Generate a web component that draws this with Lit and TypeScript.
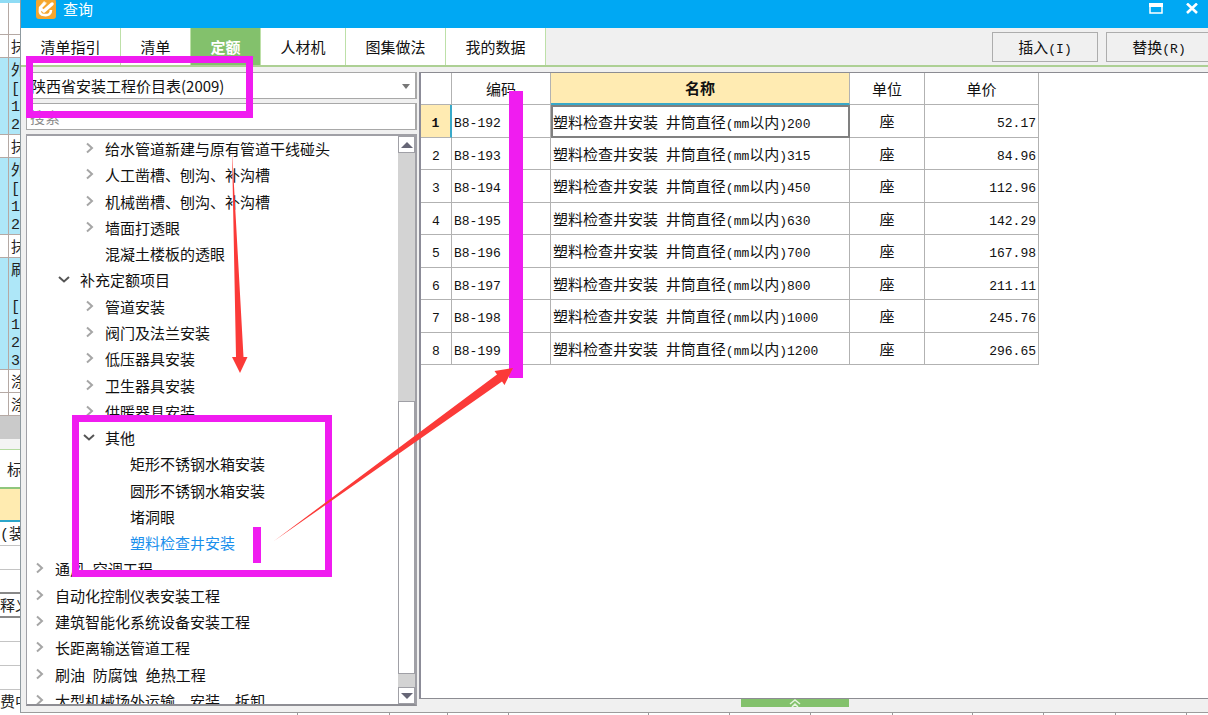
import { LitElement, html, css, svg } from "lit";
import { customElement, state } from "lit/decorators.js";
import { classMap } from "lit/directives/class-map.js";

const base = css`
  *, *::before, *::after { box-sizing: border-box; }
  .latin { font-family: "Liberation Mono", monospace; font-size: 13px; line-height: 1; white-space: pre; }
`;

/** Sets runs of Latin text in the narrow monospace face. */
const mixed = (text: string) =>
  text
    .split(/([\x20-\x7e]+)/)
    .map((part) => (/^[\x20-\x7e]/.test(part) ? html`<span class="latin">${part}</span>` : part));

/* ---------- sheet visible behind the dialog ---------- */

@customElement("back-sheet")
class BackSheet extends LitElement {
  static styles = [base, css`
    :host { display: block; width: 20px; overflow: hidden; background: #fff; color: #222;
      border-top: 3px solid #8fdcf5; font-size: 15px; line-height: 18px; white-space: nowrap; }
    .latin { font-size: 15px; }
    .row { display: grid; grid-template-columns: 9px 40px; border-bottom: 1px solid #b5a9a4; }
    .num { border-right: 1px solid #b5a9a4; }
    .body { padding: 2px 0 0 2px; overflow: hidden; }
    .head { height: 32px; }
    .short { height: 23px; }
    .tall { height: 77px; background: #aee7f8; }
    .taller { height: 112px; background: #aee7f8; }
    .line { height: 18px; }
    .scroll { height: 23px; background: #cacaca; }
    .gap { height: 11px; background: #f4f4f4; border-bottom: 1px solid #b4dba0; }
    .title { height: 39px; padding: 10px 0 0 7px; border-bottom: 2px solid #8fc67c; }
    .pick { height: 33px; background: #ffebb0; border-bottom: 2px solid #2ba5c9; }
    .cell { height: 24px; padding-top: 2px; border-bottom: 1px solid #c4c4c4; overflow: hidden; }
    .dark { border-bottom: 2px solid #888; }
  `];

  render() {
    const row = (kind: string, lines: string[]) => html`
      <div class="row ${kind}"><div class="num"></div>
        <div class="body">${lines.map((l) => html`<div class="line">${mixed(l)}</div>`)}</div></div>`;
    return html`
      ${row("head", [])}
      ${row("short", ["抹"])}
      ${row("tall", ["外", "[", "1", "2"])}
      ${row("short", ["抹"])}
      ${row("tall", ["外", "[", "1", "2"])}
      ${row("short", ["抹"])}
      ${row("taller", ["刷", "", "[", "1", "2", "3"])}
      ${row("short", ["涂"])}
      ${row("short", ["涂"])}
      <div class="scroll"></div>
      <div class="gap"></div>
      <div class="title">标</div>
      <div class="pick"></div>
      <div class="cell">${mixed("(")}装</div>
      <div class="cell"></div>
      <div class="cell dark"></div>
      <div class="cell dark">释义</div>
      <div class="cell"></div>
      <div class="cell"></div>
      <div class="cell"></div>
      <div class="cell">费中</div>`;
  }
}

/* ---------- category tree ---------- */

interface TreeItem { label: string; level: number; mark?: "open" | "closed"; }

const item = (level: number, label: string, mark?: "open" | "closed"): TreeItem => ({ level, label, mark });

const TREE: TreeItem[] = [
  item(2, "给水管道新建与原有管道干线碰头", "closed"),
  item(2, "人工凿槽、刨沟、补沟槽", "closed"),
  item(2, "机械凿槽、刨沟、补沟槽", "closed"),
  item(2, "墙面打透眼", "closed"),
  item(2, "混凝土楼板的透眼"),
  item(1, "补充定额项目", "open"),
  item(2, "管道安装", "closed"),
  item(2, "阀门及法兰安装", "closed"),
  item(2, "低压器具安装", "closed"),
  item(2, "卫生器具安装", "closed"),
  item(2, "供暖器具安装", "closed"),
  item(2, "其他", "open"),
  item(3, "矩形不锈钢水箱安装"),
  item(3, "圆形不锈钢水箱安装"),
  item(3, "堵洞眼"),
  item(3, "塑料检查井安装"),
  item(0, "通风 空调工程", "closed"),
  item(0, "自动化控制仪表安装工程", "closed"),
  item(0, "建筑智能化系统设备安装工程", "closed"),
  item(0, "长距离输送管道工程", "closed"),
  item(0, "刷油 防腐蚀 绝热工程", "closed"),
  item(0, "大型机械场外运输、安装、拆卸", "closed"),
];

@customElement("category-tree")
class CategoryTree extends LitElement {
  @state() private selected = "塑料检查井安装";

  static styles = [base, css`
    :host { display: flex; min-height: 0; overflow: hidden; background: #fff; border: 2px solid #a0a0a6;
      border-left-width: 1px; border-bottom-color: #8e8e94; box-sizing: border-box; }
    .view { flex: 1; min-width: 0; overflow: hidden; }
    .list { display: grid; grid-auto-rows: 1fr; height: calc(100% + 10px); margin: 0; padding: 0; list-style: none; }
    .item { display: flex; align-items: center; gap: 8px; padding-left: 4px; min-height: 0;
      line-height: 20px; white-space: nowrap; cursor: default; }
    .l1 { padding-left: 29px; }
    .l2 { padding-left: 54px; }
    .l3 { padding-left: 79px; }
    .selected { color: #1a8fec; }
    .mark { width: 16px; height: 16px; flex: none; fill: none; stroke: #a6a6a6; stroke-width: 2; }
    .open { stroke: #555; }
    .bar { display: flex; flex-direction: column; width: 17px; background: #d3d3d3; }
    .arrow { display: grid; place-items: center; height: 17px; padding: 0; background: #fff; border: 1px solid #a0a0a6; }
    .arrow svg { width: 12px; height: 6px; fill: #666676; }
    .before { flex: 249; }
    .thumb { flex: 273; background: #fff; border: 1px solid #a0a0a6; }
    .after { flex: 13; }
  `];

  render() {
    return html`
      <div class="view">
        <ul class="list" role="tree">
          ${TREE.map((t) => html`
            <li role="treeitem" class=${classMap({ item: true, [`l${t.level}`]: true, selected: t.label === this.selected })}
              @click=${() => (this.selected = t.label)}>
              <svg class=${classMap({ mark: true, open: t.mark === "open" })} viewBox="0 0 16 16">
                ${t.mark === "open" ? svg`<path d="M3 5 L8 9.500 L13 5"/>` : ""}
                ${t.mark === "closed" ? svg`<path d="M6 2.500 L11 7 L6 11.500"/>` : ""}
              </svg>
              <span>${mixed(t.label)}</span>
            </li>`)}
        </ul>
      </div>
      <div class="bar">
        <button class="arrow" aria-label="向上"><svg viewBox="0 0 12 6"><path d="M6 0 L12 6 H0Z"/></svg></button>
        <div class="before"></div><div class="thumb"></div><div class="after"></div>
        <button class="arrow" aria-label="向下"><svg viewBox="0 0 12 6"><path d="M6 6 L12 0 H0Z"/></svg></button>
      </div>`;
  }
}

/* ---------- price table ---------- */

const ROWS: [string, string, string][] = [
  ["B8-192", "200", "52.17"],
  ["B8-193", "315", "84.96"],
  ["B8-194", "450", "112.96"],
  ["B8-195", "630", "142.29"],
  ["B8-196", "700", "167.98"],
  ["B8-197", "800", "211.11"],
  ["B8-198", "1000", "245.76"],
  ["B8-199", "1200", "296.65"],
];

@customElement("price-table")
class PriceTable extends LitElement {
  static styles = [base, css`
    :host { display: block; box-sizing: border-box; background: #fff; overflow: hidden;
      border: 1px solid #8c8c92; border-left: 2px solid #8c8c98; border-right: 0; }
    .table { border-collapse: separate; border-spacing: 0; table-layout: fixed; width: 618px; }
    .index { width: 31px; }
    .code { width: 99px; }
    .name { width: 299px; }
    .unit { width: 75px; }
    .price { width: 114px; }
    th, td { height: 32px; padding: 0 2px; border: 0 solid #b2b2b2; border-width: 0 1px 1px 0;
      font-weight: normal; line-height: 20px; text-align: left; white-space: nowrap; overflow: hidden; }
    .odd th, .odd td { height: 33px; }
    .table .mid { text-align: center; }
    .table .end { text-align: right; }
    .table .hot { background: #ffebb2; font-weight: bold; }
    .table .top { border-bottom: 2px solid #38a9c9; }
    .table .side { border-right: 2px solid #38a9c9; }
    .table .focus { padding: 0 0 0 2px; border: 0; box-shadow: inset 0 0 0 2px #808080; }
  `];

  render() {
    return html`
      <table class="table">
        <colgroup><col class="index"><col class="code"><col class="name"><col class="unit"><col class="price"></colgroup>
        <thead><tr>
          <th></th><th class="mid">编码</th><th class="mid hot top">名称</th><th class="mid">单位</th><th class="mid">单价</th>
        </tr></thead>
        <tbody>
          ${ROWS.map(([code, size, price], i) => html`
            <tr class=${i % 2 ? "" : "odd"}>
              <th class=${classMap({ mid: true, hot: i === 0, side: i === 0 })}>${mixed(String(i + 1))}</th>
              <td>${mixed(code)}</td>
              <td class=${i === 0 ? "focus" : ""}>${mixed(`塑料检查井安装 井筒直径(mm以内)${size}`)}</td>
              <td class="mid">座</td>
              <td class="end">${mixed(price)}</td>
            </tr>`)}
        </tbody>
      </table>`;
  }
}

/* ---------- hand-drawn notes over the window ---------- */

@customElement("markup-layer")
class MarkupLayer extends LitElement {
  static styles = css`
    :host { position: absolute; inset: 0; overflow: hidden; pointer-events: none; }
    .canvas { display: block; width: 1208px; height: 715px; }
    .frame { fill: none; stroke: #f01cf0; stroke-width: 7; }
    .block { fill: #f01cf0; }
    .arrow { fill: #fb3a38; }
  `;
  render() {
    return html`
      <svg class="canvas" viewBox="0 0 1208 715">
        <rect class="frame" x="29.5" y="59.5" width="220" height="55"/>
        <rect class="frame" x="75.5" y="418.5" width="253" height="155"/>
        <rect class="block" x="253" y="527" width="8" height="36"/>
        <rect class="block" x="509" y="91" width="14" height="287"/>
        <path class="arrow" d="M232 150 L243.500 357 H247.500 L240 373 L232 357 H236Z"/>
        <path class="arrow" d="M274 541 L497 374.500 L494.500 371 L513 368 L504.500 385 L502 381.500Z"/>
      </svg>`;
  }
}

/* ---------- dialog ---------- */

const TABS: [string, string][] = [
  ["清单指引", "wide"], ["清单", "narrow"], ["定额", "narrow"],
  ["人材机", "medium"], ["图集做法", "wide"], ["我的数据", "wide"],
];

@customElement("app-root")
class AppRoot extends LitElement {
  @state() private tab = "定额";

  static styles = [base, css`
    :host { position: relative; display: grid; grid-template: minmax(0, 1fr) 2px / 20px minmax(0, 1fr);
      height: 100vh; overflow: hidden; background: #fff; color: #111;
      font-family: "Noto Sans CJK SC", sans-serif; font-size: 15px; }
    .dialog { display: flex; flex-direction: column; min-height: 0; background: #f0f0f0;
      border-left: 1px solid #8f9aa0; border-bottom: 1px solid #9c9c9c; overflow: hidden; }
    .titlebar { display: flex; align-items: center; gap: 7px; height: 28px; padding: 0 9px 11px 15px;
      background: #00a8f3; color: #fff; }
    .logo { width: 20px; height: 20px; }
    .caption { flex: 1; margin: 0; font-size: 15px; font-weight: normal; line-height: 18px; }
    .sys { display: grid; place-items: center; width: 14px; height: 16px; padding: 0; background: none; border: 0; }
    .sys svg { width: 14px; height: 12px; fill: none; stroke: #fff; }
    .controls { display: flex; gap: 22px; }
    .tabs { display: flex; align-items: stretch; height: 39px; border-bottom: 2px solid #add094; }
    .tab { width: 100px; padding: 1px 0 0; background: #fff; border: 0; border-right: 1px solid #bde0a8;
      font: inherit; line-height: 20px; color: #111; }
    .narrow { width: 70px; }
    .medium { width: 85px; }
    .current { background: #83c16c; color: #fff; font-weight: bold; }
    .actions { display: flex; gap: 8px; margin: 4px -4px 3px auto; }
    .action { width: 106px; padding: 0; background: #f0f0f0; border: 1px solid #adadad; font: inherit; color: #111; line-height: 20px; }
    .content { flex: 1; display: grid; grid-template-columns: 391px minmax(0, 1fr); gap: 2px; min-height: 0;
      padding: 5px 0 0 5px; }
    .side { display: grid; grid-template-rows: 27px 27px minmax(0, 1fr); gap: 4px; min-height: 0; padding-bottom: 6px; }
    .picker { position: relative; display: block; }
    .select, .search { display: block; width: 100%; height: 27px; padding: 0 4px; margin: 0; background: #fff;
      border: 1px solid #a8a8a8; border-right: 2px solid #a8a8a8; border-radius: 0; font: inherit; line-height: 20px; color: #111; appearance: none; outline: 0; }
    .search { padding: 0 3px; }
    .search::placeholder { color: #8c8c8c; }
    .caret { position: absolute; right: 7px; top: 12px; width: 8px; height: 5px; fill: #777; pointer-events: none; }
    .main { display: grid; grid-template-rows: minmax(0, 1fr) 8px; padding-bottom: 5px; min-height: 0; }
    .handle { display: grid; place-items: center; justify-self: center; width: 108px; height: 8px; margin-right: 38px; padding: 0; border: 0; background: #83c16c; }
    .handle svg { width: 12px; height: 8px; fill: none; stroke: #e6f4df; stroke-width: 1.500; }
    .ruler { grid-column: 1 / -1; display: grid; background: #fff;
      grid-template-columns: 298fr 93fr 58fr 61fr 140fr 81fr 81fr 82fr 81fr 71fr 72fr 71fr 21fr; }
    .tick { border-right: 1px solid #999; }
  `];

  render() {
    return html`
      <back-sheet></back-sheet>
      <section class="dialog" aria-label="查询">
        <header class="titlebar">
          <svg class="logo" viewBox="0 0 20 20">
            <rect width="20" height="20" rx="3" fill="#f5a62d"/>
            <path d="M3 8 L8 2 L11 4 L6 9 Z" fill="#ffe6b5"/>
            <path d="M9 4 L4 9 L8 12 M4 10 Q3 16 8 16 Q15 17 15 11" fill="none" stroke="#fff" stroke-width="2.600" stroke-linejoin="round"/>
            <path d="M8 12 L16 5" fill="none" stroke="#fff" stroke-width="3.500" stroke-linecap="round"/>
          </svg>
          <h1 class="caption">查询</h1>
          <div class="controls">
            <button class="sys" aria-label="最大化"><svg viewBox="0 0 14 12"><path d="M1 1V10H13V1" stroke-width="1.500"/><path d="M0 2H14" stroke-width="4"/></svg></button>
            <button class="sys" aria-label="关闭"><svg viewBox="0 0 14 12"><path d="M2 0.500 L12 10 M12 0.500 L2 10" stroke-width="2.600"/></svg></button>
          </div>
        </header>
        <nav class="tabs">
          ${TABS.map(([label, size]) => html`
            <button class=${classMap({ tab: true, [size]: true, current: label === this.tab })}
              @click=${() => (this.tab = label)}>${label}</button>`)}
          <div class="actions">
            <button class="action">${mixed("插入(I)")}</button>
            <button class="action">${mixed("替换(R)")}</button>
          </div>
        </nav>
        <div class="content">
          <div class="side">
            <label class="picker">
              <select class="select" aria-label="定额库"><option>陕西省安装工程价目表(2009)</option></select>
              <svg class="caret" viewBox="0 0 8 5"><path d="M0 0 H8 L4 5Z"/></svg>
            </label>
            <input class="search" type="text" placeholder="搜索" aria-label="搜索">
            <category-tree></category-tree>
          </div>
          <div class="main">
            <price-table></price-table>
            <button class="handle" aria-label="展开"><svg viewBox="0 0 12 8"><path d="M1 5 L6 1 L11 5 M3 8 L6 5 L9 8"/></svg></button>
          </div>
        </div>
      </section>
      <div class="ruler">${Array.from({ length: 12 }, () => html`<div class="tick"></div>`)}</div>
      <markup-layer></markup-layer>`;
  }
}
